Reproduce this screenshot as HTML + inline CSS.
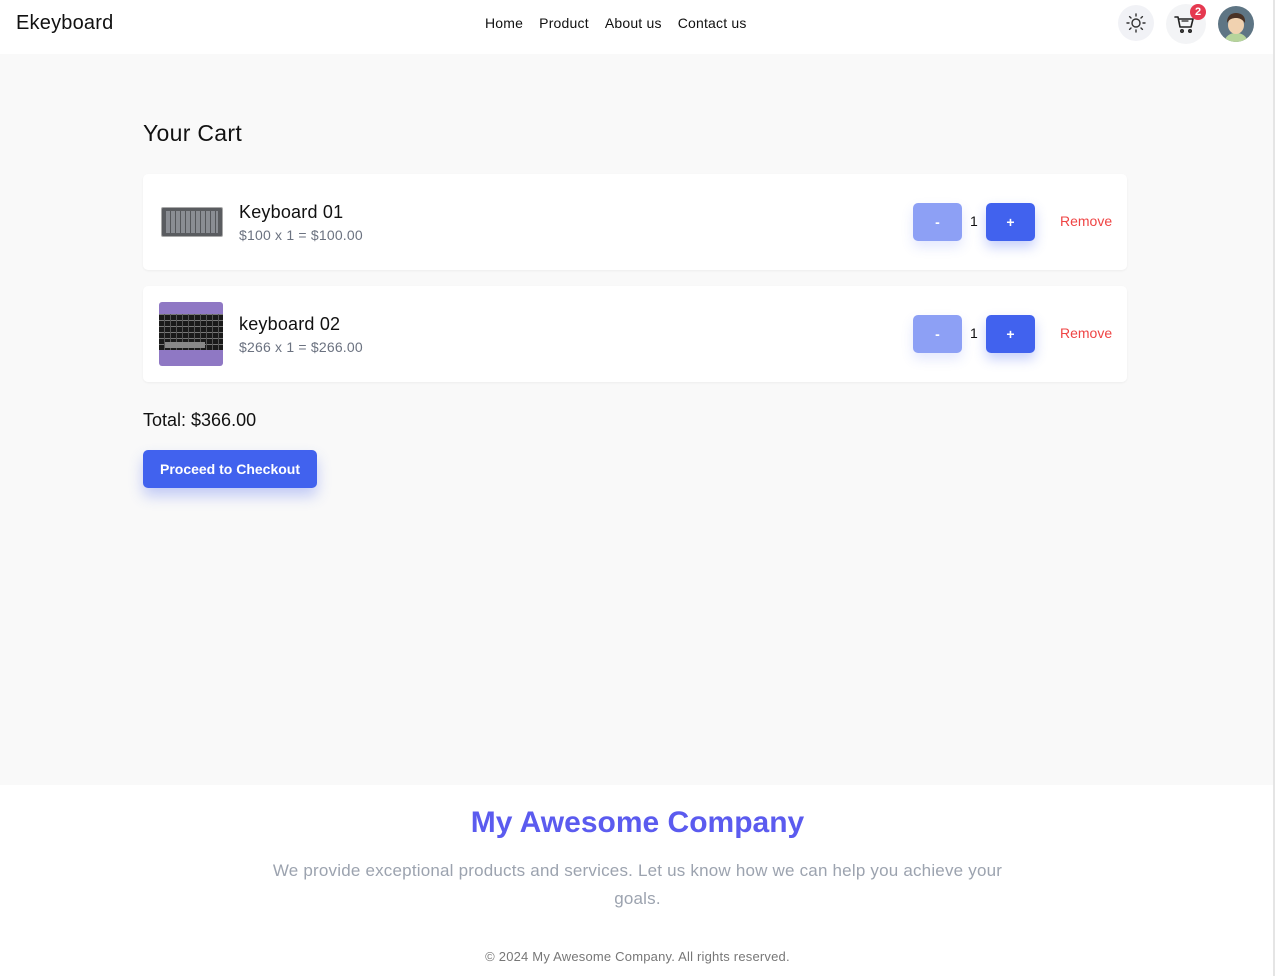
<!DOCTYPE html>
<html><head><meta charset="utf-8"><style>
*{box-sizing:border-box;margin:0;padding:0}
body{width:1275px;height:976px;overflow:hidden;background:#f9f9f9;font-family:"Liberation Sans",sans-serif;color:#111;position:relative}
.hdr{height:54px;background:#fff;position:relative}
.logo{position:absolute;left:16px;top:12px;font-size:20px;color:#111;letter-spacing:0.2px}
.nav{position:absolute;left:485px;top:15px;font-size:14px;letter-spacing:0.2px}
.nav span{margin-right:16px}
.ic{position:absolute;top:5px;width:36px;height:36px;border-radius:50%;background:#f1f2f6}
.badge{position:absolute;left:1190px;top:4px;width:16px;height:16px;border-radius:50%;background:#e53950;color:#fff;font-size:11px;font-weight:bold;text-align:center;line-height:16px}
h1{position:absolute;left:143px;top:120px;font-size:23px;font-weight:normal;letter-spacing:0.3px}
.card{position:absolute;left:143px;width:984px;height:96px;background:#fff;border-radius:5px;box-shadow:0 1px 2px rgba(0,0,0,.05)}
.img{position:absolute;left:16px;top:16px;width:64px;height:64px;border-radius:3px}
.nm{position:absolute;left:96px;top:28px;font-size:18px;letter-spacing:0.2px}
.pr{position:absolute;left:96px;top:53px;font-size:14px;color:#6b7280;letter-spacing:0.2px}
.b{position:absolute;top:29px;width:49px;height:38px;border-radius:5px;color:#fff;text-align:center;line-height:38px;font-size:14px;font-weight:bold}
.m{left:770px;background:#8da0f5;box-shadow:0 6px 12px rgba(66,97,240,.15)}
.p{left:843px;background:#4162ee;box-shadow:0 6px 12px rgba(66,97,240,.3)}
.q{position:absolute;left:827px;top:39px;font-size:14px}
.rm{position:absolute;left:917px;top:39px;font-size:14px;color:#ef4444}
.tot{position:absolute;left:143px;top:410px;font-size:18px}
.btn{position:absolute;left:143px;top:450px;width:174px;height:38px;background:#4162ee;border-radius:5px;color:#fff;font-size:14px;font-weight:bold;text-align:center;line-height:38px;box-shadow:0 8px 14px rgba(66,97,240,.3)}
.ft{position:absolute;left:0;top:785px;width:1275px;height:191px;background:#fff;text-align:center}
.ft h2{font-size:30px;color:#5b5bef;font-weight:bold;margin-top:21px}
.ft p{font-size:17px;color:#9ca3af;width:800px;margin:17px auto 0;line-height:28px;letter-spacing:0.2px}
.ft small{display:block;font-size:13px;color:#777;margin-top:36px;letter-spacing:0.2px}
.sb{position:absolute;right:0;top:0;width:2px;height:976px;background:#e5e5e5}
</style></head><body>
<div class="hdr">
<div class="logo">Ekeyboard</div>
<div class="nav"><span>Home</span><span>Product</span><span>About us</span><span>Contact us</span></div>
<div class="ic" style="left:1118px"><svg width="36" height="36" viewBox="0 0 36 36" fill="none" stroke="#333" stroke-width="1.4" stroke-linecap="round"><circle cx="18" cy="18" r="4"/><path d="M18 9v2M18 25v2M9 18h2M25 18h2M11.6 11.6l1.4 1.4M23 23l1.4 1.4M11.6 24.4l1.4-1.4M23 13l1.4-1.4"/></svg></div>
<div class="ic" style="left:1166px;top:4px;width:40px;height:40px;background:#f3f4f6"><svg width="40" height="40" viewBox="0 0 40 40" fill="none" stroke="#222" stroke-width="1.6" stroke-linecap="round" stroke-linejoin="round"><path d="M9 13h3l2 10h11l2-8H13"/><path d="M16 17h6" stroke-width="1.2"/><circle cx="16" cy="27" r="1.2"/><circle cx="24" cy="27" r="1.2"/></svg></div>
<div class="badge">2</div>
<div class="ic" style="left:1218px;top:6px;background:#5e7584;overflow:hidden"><svg width="36" height="36" viewBox="0 0 36 36"><path d="M6 36c2-7 7-9 12-9s10 2 12 9z" fill="#b7d49b"/><ellipse cx="18" cy="19" rx="8" ry="9" fill="#f1d2b0"/><path d="M9 17c0-8 5-10 9-10s10 2 9 10c-3-4-6-5-9-5s-7 1-9 5z" fill="#4a3326"/></svg></div>
</div>
<h1>Your Cart</h1>
<div class="card" style="top:174px">
<div class="img" style="top:33px;height:30px;left:18px;width:62px;background:#5a5c60;border:1px solid #aaa;border-radius:2px"><div style="margin:3px 4px;height:22px;background:repeating-linear-gradient(90deg,#8a8d93 0 4px,#55575b 4px 5px),#777"></div></div>
<div class="nm">Keyboard 01</div><div class="pr">$100 x 1 = $100.00</div>
<div class="b m">-</div><div class="q">1</div><div class="b p">+</div><div class="rm">Remove</div>
</div>
<div class="card" style="top:286px">
<div class="img" style="background:#8f78c4;overflow:hidden"><div style="position:absolute;top:12px;left:0;width:64px;height:36px;background:repeating-linear-gradient(0deg,#1a1a1a 0 5px,#777 5px 6px);"></div><div style="position:absolute;top:12px;left:0;width:64px;height:36px;background:repeating-linear-gradient(90deg,transparent 0 5px,#555 5px 6px);"></div><div style="position:absolute;top:40px;left:6px;width:40px;height:6px;background:#888"></div></div>
<div class="nm">keyboard 02</div><div class="pr">$266 x 1 = $266.00</div>
<div class="b m">-</div><div class="q">1</div><div class="b p">+</div><div class="rm">Remove</div>
</div>
<div class="tot">Total: $366.00</div>
<div class="btn">Proceed to Checkout</div>
<div class="ft"><h2>My Awesome Company</h2><p>We provide exceptional products and services. Let us know how we can help you achieve your<br>goals.</p><small>© 2024 My Awesome Company. All rights reserved.</small></div>
<div class="sb"></div>
</body></html>
